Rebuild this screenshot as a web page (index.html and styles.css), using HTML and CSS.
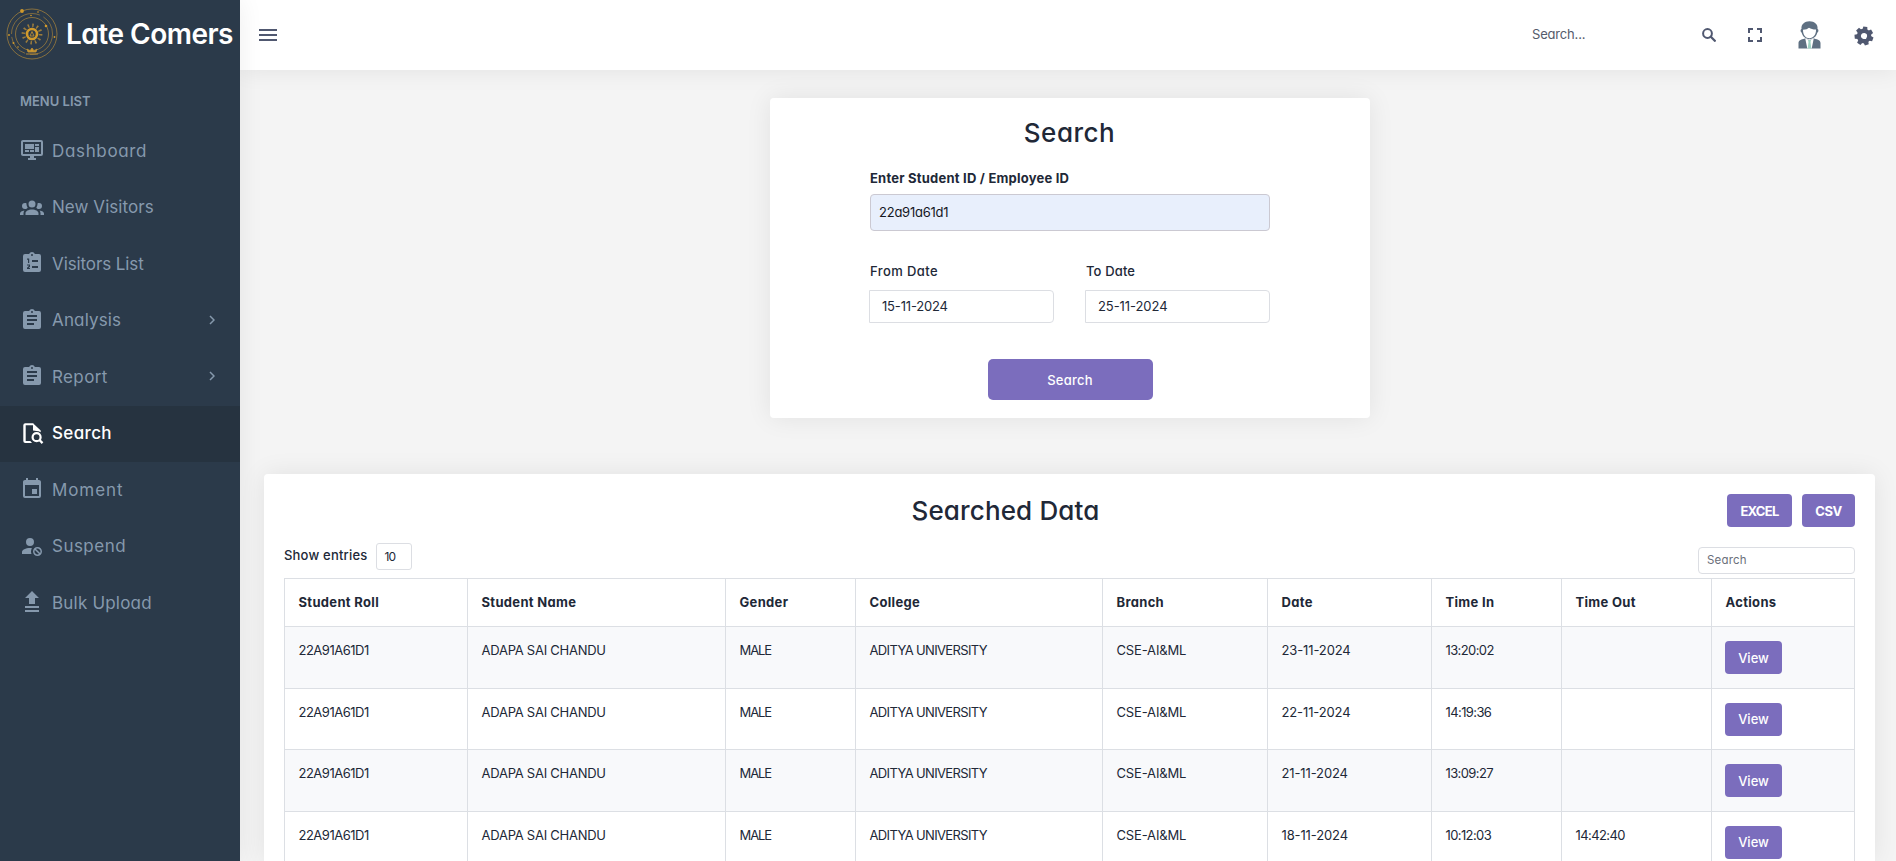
FILE: index.html
```html
<!DOCTYPE html>
<html lang="en">
<head>
<meta charset="utf-8">
<title>Late Comers</title>
<link rel="stylesheet" href="styles.css">
</head>
<body>
<div class="app">
  <aside class="sidebar">
    <div class="brand">
      <svg class="emblem" width="52" height="52" viewBox="0 0 52 52" fill="none" stroke="#b98d38">
        <circle cx="26" cy="26" r="25" stroke-width=".8" opacity=".8"/>
        <circle cx="26" cy="26" r="20.5" stroke-width=".9" opacity=".65" stroke-dasharray="34 5 22 3 40 4"/>
        <circle cx="26" cy="26" r="16.5" stroke-width=".8" opacity=".8"/>
        <circle cx="26" cy="26" r="8.6" stroke-width="3.6" stroke-dasharray="1.5 3" opacity=".8"/>
        <circle cx="26" cy="26" r="5" stroke-width="2.6" stroke="#d19a2c"/>
        <path d="M24 28l2-4.500 2 4.500z" stroke-width=".9"/>
        <path d="M20 46h12M22 44l-1-3 3 2 2-3 2 3 3-2-1 3z" fill="#d19a2c" stroke-width=".9"/>
        <g fill="#d19a2c" stroke="none"><circle cx="16" cy="3" r="1.900"/><circle cx="40" cy="18" r="1.300"/><circle cx="7.500" cy="35" r="1"/><circle cx="25" cy="7.500" r=".8"/><circle cx="32" cy="4" r=".8"/><circle cx="48.500" cy="29" r=".9"/><circle cx="3" cy="27" r=".9"/><circle cx="12" cy="39" r=".8"/></g>
      </svg>
      <span class="brand-name">Late Comers</span>
    </div>
    <div class="menu-title">MENU LIST</div>
    <nav class="menu">
      <a class="item t-dash"><svg viewBox="0 0 24 24"><path d="M21,16V4H3V16H21M21,2A2,2 0 0,1 23,4V16A2,2 0 0,1 21,18H14V20H16V22H8V20H10V18H3C1.890,18 1,17.100 1,16V4C1,2.890 1.890,2 3,2H21M5,6H14V11H5V6M15,6H19V8H15V6M19,9V14H15V9H19M5,12H9V14H5V12M10,12H14V14H10V12Z"/></svg><span>Dashboard</span></a>
      <a class="item t-new"><svg viewBox="0 0 24 24"><path d="M12,5.500A3.500,3.500 0 0,1 15.500,9A3.500,3.500 0 0,1 12,12.500A3.500,3.500 0 0,1 8.500,9A3.500,3.500 0 0,1 12,5.500M5,8C5.560,8 6.080,8.150 6.530,8.420C6.380,9.850 6.800,11.270 7.660,12.380C7.160,13.340 6.160,14 5,14A3,3 0 0,1 2,11A3,3 0 0,1 5,8M19,8A3,3 0 0,1 22,11A3,3 0 0,1 19,14C17.840,14 16.840,13.340 16.340,12.380C17.200,11.270 17.620,9.850 17.470,8.420C17.920,8.150 18.440,8 19,8M5.500,18.250C5.500,16.180 8.410,14.500 12,14.500C15.590,14.500 18.500,16.180 18.500,18.250V20H5.500V18.250M0,20V18.500C0,17.110 1.890,15.940 4.450,15.600C3.860,16.280 3.500,17.220 3.500,18.250V20H0M24,20H20.500V18.250C20.500,17.220 20.140,16.280 19.550,15.600C22.110,15.940 24,17.110 24,18.500V20Z"/></svg><span>New Visitors</span></a>
      <a class="item t-list"><svg viewBox="0 0 24 24"><path fill-rule="evenodd" d="M12,3A1,1 0 0,1 13,4A1,1 0 0,1 12,5A1,1 0 0,1 11,4A1,1 0 0,1 12,3M19,3H14.820C14.400,1.840 13.300,1 12,1C10.700,1 9.600,1.840 9.180,3H5A2,2 0 0,0 3,5V19A2,2 0 0,0 5,21H19A2,2 0 0,0 21,19V5A2,2 0 0,0 19,3ZM12,9H18V11H12ZM12,15H18V17H12ZM7,7.500H9.200V12H8V8.700H7ZM7,13.500H10V15.700L8.600,17H10V18H7V16.700L8.800,15V14.500H7Z"/></svg><span>Visitors List</span></a>
      <a class="item t-ana"><svg viewBox="0 0 24 24"><path d="M17,9H7V7H17M17,13H7V11H17M14,17H7V15H14M12,3A1,1 0 0,1 13,4A1,1 0 0,1 12,5A1,1 0 0,1 11,4A1,1 0 0,1 12,3M19,3H14.820C14.400,1.840 13.300,1 12,1C10.700,1 9.600,1.840 9.180,3H5A2,2 0 0,0 3,5V19A2,2 0 0,0 5,21H19A2,2 0 0,0 21,19V5A2,2 0 0,0 19,3Z"/></svg><span>Analysis</span><svg class="chev" viewBox="0 0 6 10"><path d="M1 1l4 4-4 4"/></svg></a>
      <a class="item t-rep"><svg viewBox="0 0 24 24"><path d="M17,9H7V7H17M17,13H7V11H17M14,17H7V15H14M12,3A1,1 0 0,1 13,4A1,1 0 0,1 12,5A1,1 0 0,1 11,4A1,1 0 0,1 12,3M19,3H14.820C14.400,1.840 13.300,1 12,1C10.700,1 9.600,1.840 9.180,3H5A2,2 0 0,0 3,5V19A2,2 0 0,0 5,21H19A2,2 0 0,0 21,19V5A2,2 0 0,0 19,3Z"/></svg><span>Report</span><svg class="chev" viewBox="0 0 6 10"><path d="M1 1l4 4-4 4"/></svg></a>
      <a class="item active t-search"><svg viewBox="0 0 24 24"><path d="M13 2.300L20.700 9.500V11.200C19.500 10.400 18 10 16.500 10L13 9.500ZM5.300 2.300H13.500V4.300H5.700V20H10.300L12 22H5.300A2 2 0 0 1 3.300 20V4.300A2 2 0 0 1 5.300 2.300Z"/><circle cx="16.600" cy="16.200" r="4" fill="none" stroke="currentColor" stroke-width="2.200"/><path d="M19.200 18.800L22.500 22.100" stroke="currentColor" stroke-width="2.300"/></svg><span>Search</span></a>
      <a class="item t-mom"><svg viewBox="0 0 24 24"><path d="M19,19H5V8H19M16,1V3H8V1H6V3H5C3.890,3 3,3.890 3,5V19A2,2 0 0,0 5,21H19A2,2 0 0,0 21,19V5C21,3.890 20.100,3 19,3H18V1M17,12H12V17H17V12Z"/></svg><span>Moment</span></a>
      <a class="item t-sus"><svg viewBox="0 0 24 24"><path d="M10 4A4 4 0 0 0 6 8A4 4 0 0 0 10 12A4 4 0 0 0 14 8A4 4 0 0 0 10 4M17.500 13C15 13 13 15 13 17.500C13 20 15 22 17.500 22C20 22 22 20 22 17.500C22 15 20 13 17.500 13M10 14C5.580 14 2 15.790 2 18V20H11.500A6.500 6.500 0 0 1 11 17.500A6.500 6.500 0 0 1 11.950 14.140C11.320 14.060 10.680 14 10 14M17.500 14.500C19.160 14.500 20.500 15.840 20.500 17.500C20.500 18.060 20.350 18.580 20.080 19L16 14.920C16.420 14.650 16.940 14.500 17.500 14.500M14.920 16L19 20.080C18.580 20.350 18.060 20.500 17.500 20.500C15.840 20.500 14.500 19.160 14.500 17.500C14.500 16.940 14.650 16.420 14.920 16Z"/></svg><span>Suspend</span></a>
      <a class="item t-bulk"><svg viewBox="0 0 24 24"><path d="M12 1L19 8H15V14H9V8H5ZM5 16H19V18H5ZM5 20H19V22H5Z"/></svg><span>Bulk Upload</span></a>
    </nav>
  </aside>

  <div class="page">
    <header class="topbar">
      <svg class="burger" width="18" height="12" viewBox="0 0 18 12"><path d="M0 1h18M0 6h18M0 11h18"/></svg>
      <div class="top-right">
        <span class="top-search">Search...</span>
        <svg class="i-mag" width="14" height="14" viewBox="0 0 14 14" fill="none" stroke="#505870"><circle cx="5.500" cy="5.500" r="4.400" stroke-width="2"/><path d="M8.800 8.800l4 4" stroke-width="2.300" stroke-linecap="round"/></svg>
        <svg class="i-full" width="14" height="14" viewBox="0 0 14 14" fill="none" stroke="#505870" stroke-width="2"><path d="M1 5V1h4M9 1h4v4M13 9v4H9M5 13H1V9"/></svg>
        <svg class="i-user" width="23" height="28" viewBox="0 0 23 28"><path d="M3.500 8C3 3.500 6.500.3 11.500.3S20.200 3.500 19.500 8c1.200.3 1.400 3-.2 3.700C18.500 15.500 15.300 18 11.500 18S4.500 15.500 3.700 11.700C2.100 11 2.300 8.300 3.500 8Z" fill="#5f7082"/><path d="M5 8.800c3-.2 4.500-.8 6-2 2 1.300 4.500 1.900 7 1.800.3 5-2.800 8.700-6.500 8.700S4.800 13.800 5 8.800Z" fill="#fff"/><path d="M.5 27.500V22c0-2.200 2-3.500 6.500-4.500l4.500 1.200L16 17.500c4.500 1 6.500 2.300 6.500 4.500v5.500Z" fill="#5f7082"/><path d="M7.300 17.700l4.200 1 4.200-1-2 9.800H9.300Z" fill="#fff"/><path d="M10 19h3l-.5 2 .8 6.500H9.700l.8-6.500Z" fill="#9fd3c3"/></svg>
        <svg class="i-gear" width="20" height="20" viewBox="0 0 20 20"><g transform="rotate(8 10 10)" fill="#505870"><circle cx="10" cy="10" r="5.200" fill="none" stroke="#505870" stroke-width="4.200"/><path id="tooth" d="M7.400 4.500L8 .6h4l.6 3.900z"/><use href="#tooth" transform="rotate(51.430 10 10)"/><use href="#tooth" transform="rotate(102.860 10 10)"/><use href="#tooth" transform="rotate(154.290 10 10)"/><use href="#tooth" transform="rotate(205.710 10 10)"/><use href="#tooth" transform="rotate(257.140 10 10)"/><use href="#tooth" transform="rotate(308.570 10 10)"/></g></svg>
      </div>
    </header>

    <main class="content">
      <section class="card search-card">
        <h1 class="title">Search</h1>
        <label class="id-label">Enter Student ID / Employee ID</label>
        <div class="id-input">22a91a61d1</div>
        <div class="dates">
          <div class="date"><label class="l-from">From Date</label><div class="date-input d-from">15-11-2024</div></div>
          <div class="date"><label class="l-to">To Date</label><div class="date-input">25-11-2024</div></div>
        </div>
        <button class="btn submit">Search</button>
      </section>

      <section class="card data-card">
        <div class="data-head">
          <h2 class="title data-title">Searched Data</h2>
          <div class="exports"><button class="btn excel">EXCEL</button><button class="btn csv">CSV</button></div>
        </div>
        <div class="tools">
          <div class="entries"><span>Show entries</span><div class="select">10</div></div>
          <div class="filter">Search</div>
        </div>
        <table class="table">
          <colgroup><col class="c1"><col class="c2"><col class="c3"><col class="c4"><col class="c5"><col class="c6"><col class="c7"><col class="c8"><col class="c9"></colgroup>
          <thead><tr><th>Student Roll</th><th>Student Name</th><th>Gender</th><th>College</th><th>Branch</th><th>Date</th><th>Time In</th><th>Time Out</th><th>Actions</th></tr></thead>
          <tbody>
            <tr><td class="roll">22A91A61D1</td><td class="name">ADAPA SAI CHANDU</td><td class="gender">MALE</td><td class="college">ADITYA UNIVERSITY</td><td class="branch">CSE-AI&amp;ML</td><td class="day">23-11-2024</td><td class="time">13:20:02</td><td class="time"></td><td class="act"><button class="btn view">View</button></td></tr>
            <tr><td class="roll">22A91A61D1</td><td class="name">ADAPA SAI CHANDU</td><td class="gender">MALE</td><td class="college">ADITYA UNIVERSITY</td><td class="branch">CSE-AI&amp;ML</td><td class="day">22-11-2024</td><td class="time">14:19:36</td><td class="time"></td><td class="act"><button class="btn view">View</button></td></tr>
            <tr><td class="roll">22A91A61D1</td><td class="name">ADAPA SAI CHANDU</td><td class="gender">MALE</td><td class="college">ADITYA UNIVERSITY</td><td class="branch">CSE-AI&amp;ML</td><td class="day">21-11-2024</td><td class="time">13:09:27</td><td class="time"></td><td class="act"><button class="btn view">View</button></td></tr>
            <tr><td class="roll">22A91A61D1</td><td class="name">ADAPA SAI CHANDU</td><td class="gender">MALE</td><td class="college">ADITYA UNIVERSITY</td><td class="branch">CSE-AI&amp;ML</td><td class="day">18-11-2024</td><td class="time">10:12:03</td><td class="time">14:42:40</td><td class="act"><button class="btn view">View</button></td></tr>
          </tbody>
        </table>
      </section>
    </main>
  </div>
</div>
</body>
</html>
```
FILE: styles.css
```css
* { box-sizing: border-box; }
body {
  margin: 0;
  background: #f4f4f4;
  color: #212837;
  font: 13px/20px Inter, "Open Sans", sans-serif;
  font-feature-settings: "cv11";
  white-space: nowrap;
}
svg { display: block; flex: none; }
button { font: inherit; font-feature-settings: inherit; }
.app { display: flex; height: 861px; overflow: hidden; }

/* Sidebar */
.sidebar {
  position: relative;
  z-index: 2;
  width: 240px;
  flex: none;
  background: #2b3a4a;
  color: #8699ad;
  box-shadow: 0 0 24px rgba(0, 0, 0, .07);
}
.brand { display: flex; align-items: center; height: 70px; padding: 0 0 3px 6px; }
.brand-name {
  margin-left: 8px;
  color: #fff;
  font-size: 28px;
  font-weight: 600;
  letter-spacing: -.5px;
}
.menu-title { height: 53px; padding: 21px 20px 0; font-weight: 600; line-height: 20px; }
.item {
  display: flex;
  align-items: center;
  height: 56.500px;
  padding: 0 25px 0 20px;
  font-size: 17px;
}
.item svg { width: 24px; height: 24px; margin: 0 8px 2px 0; fill: currentColor; }
.item span { margin-bottom: 1px; }
.item .chev { width: 6px; height: 10px; margin: 0 0 2px auto; fill: none; stroke: currentColor; stroke-width: 1.500; }
.item.active { background: #263340; color: #fff; font-weight: 500; }
.t-dash { letter-spacing: .66px; }
.t-new { letter-spacing: .06px; }
.t-list { letter-spacing: -.1px; }
.t-ana { letter-spacing: .15px; }
.t-rep { letter-spacing: .38px; }
.t-search { letter-spacing: .35px; }
.t-mom { letter-spacing: .9px; }
.t-sus { letter-spacing: .48px; }
.t-bulk { letter-spacing: .2px; }

/* Top bar */
.page { flex: 1; min-width: 0; }
.topbar {
  position: relative;
  z-index: 1;
  display: flex;
  align-items: center;
  justify-content: space-between;
  height: 70px;
  padding: 0 22px 0 19px;
  background: #fff;
  box-shadow: 0 0 24px rgba(0, 0, 0, .08);
}
.burger { fill: none; stroke: #505870; stroke-width: 2; }
.top-right { display: flex; align-items: center; height: 70px; color: #555b6b; }
.top-search { width: 170px; letter-spacing: -.18px; padding-bottom: 2px; }
.i-mag { margin-bottom: 1px; }
.i-full { margin-left: 32px; }
.i-user { margin: 0 0 1px 36px; }
.i-gear { margin: 2px 0 0 33px; }

/* Cards */
.content { padding: 28px 21px 0 24px; }
.card { background: #fff; border-radius: 4px; box-shadow: 0 0 26px rgba(0, 0, 0, .08); }
.title { margin: 0; font-size: 26px; font-weight: 500; line-height: 32px; }
.btn {
  display: block;
  padding: 0;
  border: 0;
  border-radius: 4px;
  background: #7b6dbd;
  color: #fff;
  text-align: center;
}

.search-card { width: 600px; height: 320px; margin: 0 0 56px 506px; padding: 19px 100px 0; }
.search-card .title { padding-right: 1px; text-align: center; letter-spacing: .5px; }
.id-label { display: block; margin-top: 19px; font-weight: 700; letter-spacing: .22px; }
.id-input {
  height: 37px;
  margin-top: 6px;
  padding: 0 8px;
  border: 1px solid #cbc9d2;
  border-radius: 4px;
  background: #e8effc;
  line-height: 35px;
  letter-spacing: -.24px;
  color: #15181f;
}
.dates { display: flex; justify-content: space-between; margin: 30px 0 0 -1px; }
.date { width: 185px; font-weight: 500; }
.date label { display: block; margin-bottom: 9px; padding-left: 1px; }
.l-from { letter-spacing: .41px; }
.l-to { letter-spacing: .14px; }
.date-input {
  height: 33px;
  padding: 0 12px;
  border: 1px solid #dcdee3;
  border-radius: 0 4px 4px 0;
  font-weight: 400;
  line-height: 31px;
  letter-spacing: -.07px;
}
.d-from { letter-spacing: -.17px; }
.submit { width: 165px; height: 41px; margin: 36px auto 0 117.500px; border-radius: 5px; font-weight: 500; letter-spacing: .26px; }

.data-card { height: 387px; padding: 20px 20px 0; border-radius: 4px 4px 0 0; overflow: hidden; }
.data-head { display: flex; height: 49px; }
.data-title { flex: 1; text-align: center; letter-spacing: .15px; line-height: 33px; }
.exports { display: flex; gap: 10px; font-weight: 700; }
.exports .btn { height: 33px; }
.excel { width: 65px; letter-spacing: -.7px; }
.csv { width: 53px; letter-spacing: -.4px; }
.tools { display: flex; justify-content: space-between; height: 35px; }
.entries { display: flex; height: 27px; font-weight: 500; line-height: 25px; letter-spacing: .2px; }
.select {
  width: 36px;
  height: 27px;
  margin-left: 8px;
  padding-left: 8px;
  border: 1px solid #dcdee3;
  border-radius: 3px;
  font-size: 12px;
  font-weight: 400;
  line-height: 25px;
  letter-spacing: -.8px;
}
.filter {
  width: 157px;
  height: 27px;
  margin-top: 4px;
  padding-left: 8px;
  border: 1px solid #dcdee3;
  border-radius: 4px;
  color: #6b6f7a;
  font-size: 11.500px;
  line-height: 25px;
  letter-spacing: .17px;
}
.table { width: 1571px; table-layout: fixed; border-collapse: collapse; }
.table th, .table td { border: 1px solid #dcdfe4; padding: 13px 0 0 13.500px; text-align: left; vertical-align: top; }
.table th { height: 48px; font-weight: 700; letter-spacing: .32px; }
.table td { height: 61.600px; }
.table .act { padding: 14px 0 0 13px; }
.table tbody tr:nth-child(odd) { background: #f8f9fb; }
.c1 { width: 183px; }
.c2 { width: 258px; }
.c3 { width: 130px; }
.c4 { width: 247px; }
.c5 { width: 165px; }
.c6 { width: 164px; }
.c7 { width: 130px; }
.c8 { width: 150px; }
.c9 { width: 143px; }
.roll { letter-spacing: -.5px; }
.name { letter-spacing: -.25px; }
.gender { letter-spacing: -1.100px; }
.college { letter-spacing: -.64px; }
.branch { letter-spacing: -.15px; }
.day { letter-spacing: -.12px; }
.time { letter-spacing: -.6px; }
.view { width: 57px; height: 33px; font-weight: 500; }
```
